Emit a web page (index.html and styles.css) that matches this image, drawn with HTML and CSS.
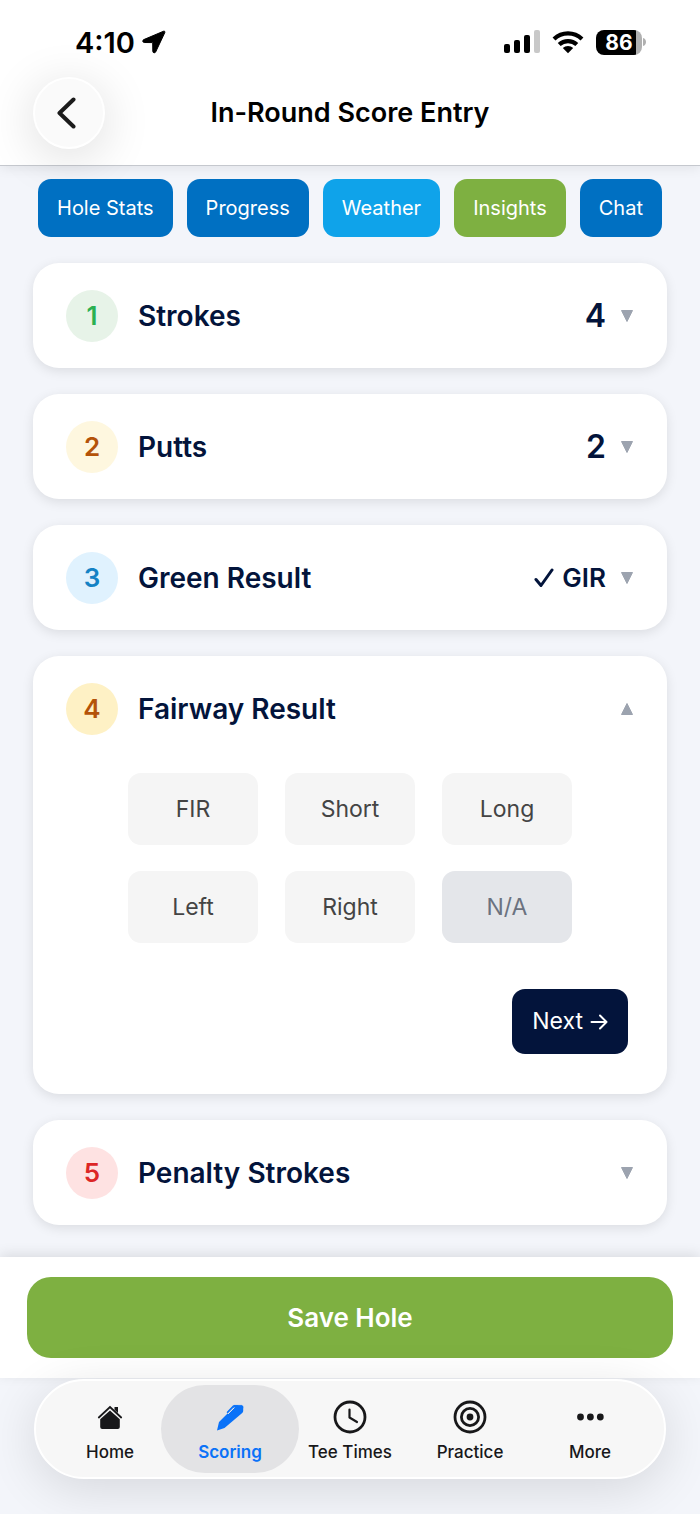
FILE: index.html
```html
<!DOCTYPE html>
<html lang="en">
<head>
<meta charset="utf-8">
<meta name="viewport" content="width=device-width, initial-scale=1">
<title>In-Round Score Entry</title>
<link rel="stylesheet" href="styles.css">
</head>
<body>
<header class="top">
  <div class="status">
    <div class="status-left">
      <span class="time">4:10</span>
      <svg class="location" width="24" height="24" viewBox="0 0 24 24" aria-hidden="true"><path d="M21.6 1.2 1.800 9.600c-1.600.7-1.200 2.900.4 2.900l8.200.1c.2 0 .3.1.3.3l.1 8.400c0 1.700 2.200 2.100 2.900.6L22.800 2.600c.4-.9-.3-1.800-1.200-1.400Z" stroke="#000" stroke-width="1"/></svg>
    </div>
    <div class="status-right">
      <svg width="36" height="24" viewBox="0 0 36 24" aria-hidden="true"><rect x="0" y="14" width="6" height="9" rx="2"/><rect x="10" y="10" width="6" height="13" rx="2"/><rect x="20" y="5" width="6" height="18" rx="2"/><rect x="30" y="0" width="6" height="23" rx="2" fill="#c8c8c8"/></svg>
      <svg width="32" height="24" viewBox="0 0 32 24" aria-hidden="true"><g fill="none" stroke="#000" stroke-width="4.2"><path d="M2 9a20.5 20.5 0 0 1 28 0"/><path d="M7.2 14.6a12.8 12.8 0 0 1 17.6 0"/></g><path d="M16 23.2 10.800 18a7.600 7.600 0 0 1 10.400 0Z"/></svg>
      <span class="battery"><span class="battery-level">86</span><svg width="4" height="8" viewBox="0 0 4 8" aria-hidden="true"><path d="M0 0c4 1 4 7 0 8Z" fill="#b0b0b0"/></svg></span>
    </div>
  </div>
  <div class="nav">
    <button class="back" type="button" aria-label="Back"><svg width="20" height="32" viewBox="0 0 20 32" aria-hidden="true"><path d="M17.500 2.500 3.500 16l14 13.500" fill="none" stroke="#1b1b1b" stroke-width="4" stroke-linecap="round" stroke-linejoin="round"/></svg></button>
    <h1 class="title">In-Round Score Entry</h1>
  </div>
</header>

<main class="content">
  <div class="chips">
    <button class="chip" type="button">Hole Stats</button>
    <button class="chip" type="button">Progress</button>
    <button class="chip chip-sky" type="button">Weather</button>
    <button class="chip chip-green" type="button">Insights</button>
    <button class="chip" type="button">Chat</button>
  </div>

  <section class="card">
    <button class="card-head" type="button" aria-expanded="false">
      <span class="step step-1">1</span><span class="name">Strokes</span><span class="value">4</span>
      <svg class="caret" width="14" height="14" viewBox="0 0 14 14" aria-hidden="true"><path d="M1.500 1.500h11L7 12.500Z"/></svg>
    </button>
  </section>
  <section class="card">
    <button class="card-head" type="button" aria-expanded="false">
      <span class="step step-2">2</span><span class="name">Putts</span><span class="value">2</span>
      <svg class="caret" width="14" height="14" viewBox="0 0 14 14" aria-hidden="true"><path d="M1.500 1.500h11L7 12.500Z"/></svg>
    </button>
  </section>
  <section class="card">
    <button class="card-head" type="button" aria-expanded="false">
      <span class="step step-3">3</span><span class="name">Green Result</span><span class="value value-small"><svg width="20" height="20" viewBox="0 0 20 20" aria-hidden="true"><path d="m2 11.500 5 6L18 2" fill="none" stroke="#03143b" stroke-width="3" stroke-linecap="round" stroke-linejoin="round"/></svg>GIR</span>
      <svg class="caret" width="14" height="14" viewBox="0 0 14 14" aria-hidden="true"><path d="M1.500 1.500h11L7 12.500Z"/></svg>
    </button>
  </section>
  <section class="card">
    <button class="card-head" type="button" aria-expanded="true">
      <span class="step step-4">4</span><span class="name">Fairway Result</span>
      <svg class="caret" width="14" height="14" viewBox="0 0 14 14" aria-hidden="true"><path d="M1.500 12.500h11L7 1.500Z"/></svg>
    </button>
    <div class="card-body">
      <div class="options">
        <button class="option" type="button">FIR</button>
        <button class="option" type="button">Short</button>
        <button class="option" type="button">Long</button>
        <button class="option" type="button">Left</button>
        <button class="option" type="button">Right</button>
        <button class="option option-na" type="button">N/A</button>
      </div>
      <button class="next" type="button">Next <svg width="18" height="18" viewBox="0 0 18 18" aria-hidden="true"><path d="M1.500 9h15M10 2.500 16.500 9 10 15.500" fill="none" stroke="#fff" stroke-width="2" stroke-linecap="round" stroke-linejoin="round"/></svg></button>
    </div>
  </section>
  <section class="card">
    <button class="card-head" type="button" aria-expanded="false">
      <span class="step step-5">5</span><span class="name">Penalty Strokes</span>
      <svg class="caret" width="14" height="14" viewBox="0 0 14 14" aria-hidden="true"><path d="M1.500 1.500h11L7 12.500Z"/></svg>
    </button>
  </section>
</main>

<div class="save-bar"><button class="save" type="button">Save Hole</button></div>

<nav class="tabs" aria-label="Main">
  <a class="tab" href="#home"><svg width="34" height="34" viewBox="0 0 34 34" aria-hidden="true"><path d="M5.800 17.500 17 7l11.200 10.500" fill="none" stroke="#18181a" stroke-width="1.800" stroke-linecap="round"/><path d="M21.500 7h3.500v6l-3.500-3.200ZM17 10.500l9.800 8.800v7.700q0 2-2 2H9.200q-2 0-2-2v-7.700Z" fill="#18181a"/></svg>Home</a>
  <a class="tab tab-active" href="#scoring" aria-current="page"><svg width="34" height="34" viewBox="0 0 34 34" aria-hidden="true"><path d="M21 5.500q1-1.400 2 0 1-1.400 2 0 1-1.400 2 0 1-1.400 2 0 1.800-.3 1.200 1.500.6.800 0 1.500v2.500q0 1-1 2L11.500 28 4 30.500 6 22 20 8Z" fill="#0a72f8"/><path d="m14.500 12.200 6-6.200h4" fill="none" stroke="#0a72f8" stroke-width="1.600" stroke-linecap="round"/><path d="m15 14 6.500-6.500" stroke="#e3e3e5" stroke-width="1"/></svg>Scoring</a>
  <a class="tab" href="#tee-times"><svg width="34" height="34" viewBox="0 0 34 34" fill="none" stroke="#18181a" stroke-linecap="round" aria-hidden="true"><circle cx="17" cy="17" r="15" stroke-width="2.800"/><path d="M16.500 9.500v8l7.500 4.500" stroke-width="2.200" stroke-linejoin="round"/></svg>Tee Times</a>
  <a class="tab" href="#practice"><svg width="34" height="34" viewBox="0 0 34 34" fill="none" stroke="#18181a" stroke-width="2.800" aria-hidden="true"><circle cx="17" cy="17" r="15"/><circle cx="17" cy="17" r="8.600"/><circle cx="17" cy="17" r="3.400" fill="#18181a" stroke="none"/></svg>Practice</a>
  <a class="tab" href="#more"><svg width="34" height="34" viewBox="0 0 34 34" fill="#18181a" aria-hidden="true"><circle cx="7.500" cy="17" r="3.400"/><circle cx="17.400" cy="17" r="3.400"/><circle cx="27.300" cy="17" r="3.400"/></svg>More</a>
</nav>
</body>
</html>
```
FILE: styles.css
```css
* { box-sizing: border-box; }

body {
  margin: 0;
  min-height: 100vh;
  display: flex;
  flex-direction: column;
  background: #f3f5fa;
  color: #03143b;
  font-family: Inter, "Liberation Sans", sans-serif;
}

button { border: 0; padding: 0; font: inherit; color: inherit; cursor: pointer; }
svg { display: block; flex: none; }

/* Header */
.top {
  background: #fff;
  border-bottom: 1px solid #c5c8ce;
  padding-bottom: 16px;
  box-shadow: 0 2px 12px rgba(0, 0, 0, 0.08);
  color: #000;
}
.status {
  display: flex;
  justify-content: space-between;
  align-items: flex-end;
  padding: 24px 53px 0 75px;
}
.status-left, .status-right { display: flex; align-items: center; height: 36px; }
.status-left { gap: 7px; }
.status-right { gap: 12px; }
.time { font-size: 29px; font-weight: 600; }
.battery { display: flex; align-items: center; gap: 1px; }
.battery-level {
  width: 46px;
  border-radius: 8px;
  background: linear-gradient(to right, #000 40px, #b0b0b0 40px);
  color: #fff;
  font-size: 21px;
  font-weight: 700;
  line-height: 25px;
  text-align: center;
}
.nav {
  display: grid;
  grid-template-columns: 72px 1fr 72px;
  align-items: center;
  padding: 17px 33px 0;
}
.back {
  display: flex;
  align-items: center;
  justify-content: center;
  width: 72px;
  height: 72px;
  padding-right: 6px;
  border: 2px solid #fff;
  border-radius: 50%;
  background: #fafafa;
  box-shadow: 0 8px 50px rgba(0, 0, 0, 0.14);
}
.title { margin: 0; text-align: center; font-size: 27px; font-weight: 600; line-height: 32px; }

/* Content */
.content {
  flex: 1;
  display: flex;
  flex-direction: column;
  gap: 26px;
  padding: 13px 33px 32px;
}
.chips { display: flex; justify-content: center; gap: 14px; }
.chip {
  padding: 17px 19px;
  border-radius: 13px;
  background: #0070c2;
  color: #fff;
  font-size: 20px;
  line-height: 24px;
  white-space: nowrap;
}
.chip-sky { background: #0fa3ea; }
.chip-green { background: #7eb041; }

.card {
  border-radius: 26px;
  background: #fff;
  box-shadow: 0 3px 12px rgba(0, 0, 0, 0.1);
}
.card-head {
  display: flex;
  align-items: center;
  width: 100%;
  min-height: 105px;
  padding: 26px 33px;
  background: none;
  text-align: left;
}
.step {
  width: 52px;
  margin-right: 20px;
  border-radius: 50%;
  font-size: 26px;
  font-weight: 600;
  line-height: 52px;
  text-align: center;
}
.step-1 { background: #e7f3e8; color: #2bb052; }
.step-2 { background: #fef7df; color: #b45309; }
.step-3 { background: #e0f2fe; color: #1482c5; }
.step-4 { background: #fef1c5; color: #b45309; }
.step-5 { background: #fee2e2; color: #dc2626; }
.name { flex: 1; font-size: 28px; font-weight: 600; }
.value { display: flex; align-items: center; gap: 8px; font-size: 32px; font-weight: 600; }
.value-small { font-size: 26px; }
.caret { margin-left: 14px; fill: #9ca3af; stroke: #9ca3af; stroke-linejoin: round; }

.card-body {
  display: flex;
  flex-direction: column;
  gap: 46px;
  padding: 12px 39px 40px;
}
.options {
  display: grid;
  grid-template-columns: repeat(3, 130px);
  justify-content: center;
  gap: 26px 27px;
}
.option {
  border-radius: 13px;
  background: #f5f5f5;
  color: #444;
  font-size: 23px;
  line-height: 72px;
}
.option-na { background: #e4e6ea; color: #6b7280; }
.next {
  display: flex;
  align-items: center;
  gap: 7px;
  align-self: flex-end;
  padding: 0 20px;
  border-radius: 13px;
  background: #03143b;
  color: #fff;
  font-size: 23px;
  line-height: 65px;
}

/* Bottom bars */
.save-bar {
  padding: 20px 27px;
  background: #fff;
  box-shadow: 0 -3px 12px rgba(0, 0, 0, 0.1);
}
.save {
  width: 100%;
  border-radius: 24px;
  background: #7eb041;
  color: #fff;
  font-size: 26px;
  font-weight: 600;
  line-height: 81px;
}
.tabs {
  display: grid;
  grid-template-columns: repeat(5, 1fr);
  margin: 1px 34px 35px;
  padding: 4px 14px;
  border: 2px solid #fff;
  border-radius: 50px;
  background: #f7f7f7;
  box-shadow: 0 10px 50px rgba(0, 0, 0, 0.12);
}
.tab {
  display: flex;
  flex-direction: column;
  align-items: center;
  gap: 8px;
  margin: 0 -9px;
  padding: 15px 0 10px;
  border-radius: 44px;
  color: #18181a;
  font-size: 17px;
  font-weight: 500;
  line-height: 21px;
  text-decoration: none;
}
.tab-active { background: #e3e3e5; color: #0a72f8; font-weight: 600; }
```
